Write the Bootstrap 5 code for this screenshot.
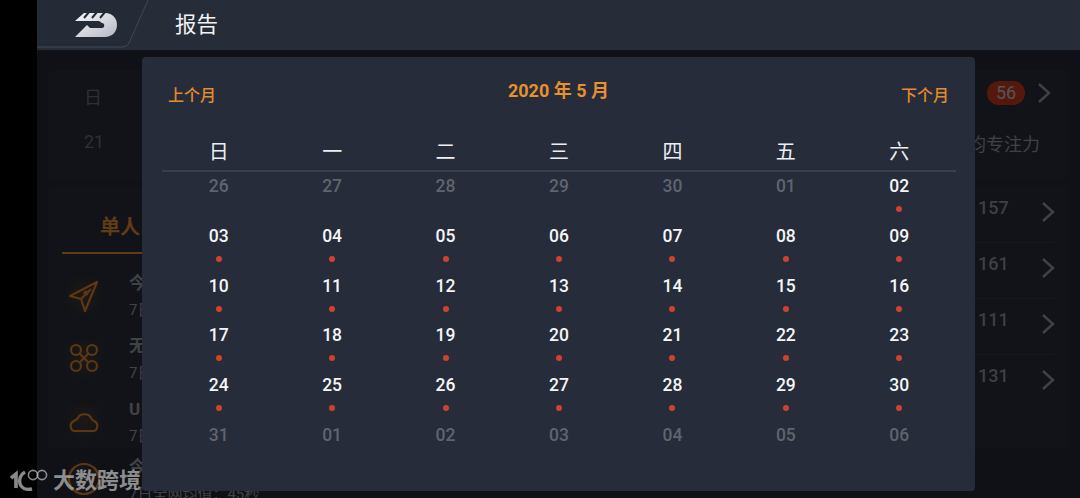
<!DOCTYPE html>
<html lang="zh">
<head>
  <meta charset="utf-8">
  <title>报告</title>
  <link href="https://cdn.jsdelivr.net/npm/bootstrap@5.3.2/dist/css/bootstrap.min.css" rel="stylesheet">
  <style>
    html, body { height: 100%; }
    body { background: #000; overflow: hidden; font-family: Roboto, "Noto Sans CJK SC", sans-serif; color: #fff; }
    .app-shell { margin-left: 37px; height: 498px; background: #2a303c; display: flex; flex-direction: column; }
    .top-bar { height: 50px; flex: none; background: #262c38; }
    .top-title { font-size: 21.5px; margin-left: 27px; color: #f2f3f5; line-height: 52px; }
    .page-body { position: relative; flex: 1; overflow: hidden; padding: 20px 12px 0 11px; background: #272c37; }
    .dim-mask { position: absolute; inset: 0; background: rgba(0, 0, 0, .6); }
    .sum-panel { height: 110px; background: #2b303c; border-radius: 6px; padding: 11px 17px 0 36px; font-size: 18px; color: #737884; }
    .sum-day { margin-top: 3px; }
    .alert-pill { width: 38px; height: 24px; border-radius: 12px; background: #d3401f; color: #d8d2cf; font-size: 18px; line-height: 24px; text-align: center; }
    .sum-second { margin-top: 17px; }
    .focus-label { font-size: 18px; color: #9ea2ab; margin: 3px 11px 0 0; }
    .stat-panel { margin-top: 7px; height: 262px; background: #2b303c; border-radius: 6px; display: flex; justify-content: space-between; }
    .tab-head { width: 200px; margin-left: 14px; height: 67px; padding: 25px 0 0 38px; font-size: 20px; font-weight: 700; color: #f0953a; border-bottom: 2px solid #f0953a; }
    .stat-row { height: 63px; display: flex; padding-left: 13px; }
    .stat-row.last-row { margin-top: -5px; }
    .stat-icon { width: 46px; height: 46px; flex: none; margin-top: 18px; background: radial-gradient(circle, rgba(233, 138, 50, .16), rgba(233, 138, 50, 0) 70%); }
    .stat-text { margin: 16px 0 0 22px; font-size: 16px; color: #a2a6af; white-space: nowrap; }
    .stat-name { font-weight: 700; font-size: 17px; line-height: 27px; }
    .stat-sub { line-height: 27px; font-size: 15px; }
    .num-list { width: 84px; margin-right: 13px; }
    .num-row { height: 56px; border-bottom: 1px solid #3a404c; font-size: 18px; font-weight: 500; color: #9a9ea7; display: flex; justify-content: space-between; }
    .num-row:last-child { border-bottom: 0; }
    .num-row span { margin: 7px 0 0 7px; }
    .chev { margin-top: 14px; }
    .cal-modal { position: absolute; left: 105px; top: 7px; width: 833px; height: 434px; background: #262c39; border-radius: 4px; padding: 0 19px 0 20px; }
    .cal-head { height: 66px; padding: 27px 7px 0 6px; }
    .cal-nav { font-size: 16px; font-weight: 500; color: #e58a2e; line-height: 24px; }
    .cal-title { font-size: 18px; font-weight: 700; color: #e6902f; line-height: 24px; margin-top: -5px; }
    .cal-grid { display: grid; grid-template-columns: repeat(7, 1fr); text-align: center; }
    .week-row { height: 49px; border-bottom: 2px solid #3a3f4b; font-size: 20px; line-height: 58px; color: #eceef1; }
    .day-rows { grid-auto-rows: 49.8px; }
    .day-cell { font-size: 17.5px; font-weight: 500; line-height: 24px; padding-top: 2px; color: #f4f5f7; }
    .day-cell.off { color: #5f6470; }
    .day-dot { width: 6px; height: 6px; border-radius: 50%; background: #d2412c; margin: 8px auto 0; }
    .brand-mark { position: absolute; left: 10px; top: 464px; display: flex; align-items: center; gap: 5px; color: rgba(190, 190, 190, .72); font-size: 22px; font-weight: 700; }
  </style>
</head>
<body>
  <div class="app-shell">
    <div class="top-bar d-flex align-items-center">
      <svg width="111" height="50" viewBox="0 0 111 50">
        <defs>
          <linearGradient id="logoFill" x1="0" y1="0" x2="1" y2="1">
            <stop offset="0" stop-color="#f7f8fa"/>
            <stop offset="1" stop-color="#b4b8c2"/>
          </linearGradient>
        </defs>
        <path d="M0 0H111L90 47H0Z" fill="#242a36"/>
        <path d="M111 0L92 43Q90 47 86 47H0" fill="none" stroke="#414857" stroke-width="1"/>
        <g transform="translate(38 13)">
          <path d="M0 8L9 0H30C38 0 42 6 42 12C42 19 37 24 30 24H0L12 12L15 15H27C30 15 30 10 27 10L24 8Z" fill="url(#logoFill)"/>
          <path d="M9 5L14 -1M17 5L22 -1M25 5L30 -1" stroke="#242a36" stroke-width="2"/>
        </g>
      </svg>
      <div class="top-title">报告</div>
    </div>

    <div class="page-body">
      <div class="sum-panel">
        <div class="d-flex justify-content-between align-items-start">
          <span class="sum-day">日</span>
          <div class="d-flex align-items-center gap-2">
            <div class="alert-pill">56</div>
            <svg class="ms-1" width="14" height="22" viewBox="0 0 14 22"><path d="M2 2L12 11L2 20" fill="none" stroke="#9ea2ab" stroke-width="2.4"/></svg>
          </div>
        </div>
        <div class="d-flex justify-content-between align-items-start sum-second">
          <span>21</span>
          <span class="focus-label">均专注力</span>
        </div>
      </div>

      <div class="stat-panel">
        <div>
          <div class="tab-head">单人</div>
          <div class="stat-row">
            <svg class="stat-icon" viewBox="0 0 46 46" fill="none" stroke="#e98a32" stroke-width="2.2" stroke-linejoin="round">
              <path d="M9 24L36 10L24 39L20 27Z"/><path d="M20 27L30 17"/><circle cx="25" cy="21" r="1.4"/>
            </svg>
            <div class="stat-text"><div class="stat-name">今</div><div class="stat-sub">7日</div></div>
          </div>
          <div class="stat-row">
            <svg class="stat-icon" viewBox="0 0 46 46" fill="none" stroke="#e98a32" stroke-width="2.2">
              <circle cx="15" cy="15" r="5"/><circle cx="31" cy="15" r="5"/><circle cx="15" cy="31" r="5"/><circle cx="31" cy="31" r="5"/>
              <path d="M18 18L28 28M28 18L18 28"/>
            </svg>
            <div class="stat-text"><div class="stat-name">无</div><div class="stat-sub">7日</div></div>
          </div>
          <div class="stat-row">
            <svg class="stat-icon" viewBox="0 0 46 46" fill="none" stroke="#e98a32" stroke-width="2.2" stroke-linejoin="round">
              <path d="M14 33H32C37 33 38 25 33 23C31 22 31 21 30 20C28 15 19 15 17 20C16 22 14 22 13 23C8 25 9 33 14 33Z"/>
            </svg>
            <div class="stat-text"><div class="stat-name">U</div><div class="stat-sub">7日</div></div>
          </div>
          <div class="stat-row last-row">
            <svg class="stat-icon" viewBox="0 0 46 46" fill="none" stroke="#e98a32" stroke-width="2.2"><circle cx="23" cy="23" r="15"/></svg>
            <div class="stat-text"><div class="stat-name">今</div><div class="stat-sub">7日全网均值：45秒</div></div>
          </div>
        </div>
        <div class="num-list">
          <div class="num-row"><span>157</span><svg class="chev" width="14" height="22" viewBox="0 0 14 22"><path d="M2 2L12 11L2 20" fill="none" stroke="#9ea2ab" stroke-width="2.4"/></svg></div>
          <div class="num-row"><span>161</span><svg class="chev" width="14" height="22" viewBox="0 0 14 22"><path d="M2 2L12 11L2 20" fill="none" stroke="#9ea2ab" stroke-width="2.4"/></svg></div>
          <div class="num-row"><span>111</span><svg class="chev" width="14" height="22" viewBox="0 0 14 22"><path d="M2 2L12 11L2 20" fill="none" stroke="#9ea2ab" stroke-width="2.4"/></svg></div>
          <div class="num-row"><span>131</span><svg class="chev" width="14" height="22" viewBox="0 0 14 22"><path d="M2 2L12 11L2 20" fill="none" stroke="#9ea2ab" stroke-width="2.4"/></svg></div>
        </div>
      </div>

      <div class="dim-mask"></div>

      <div class="cal-modal">
        <div class="cal-head d-flex justify-content-between align-items-start">
          <div class="cal-nav">上个月</div>
          <div class="cal-title">2020 年 5 月</div>
          <div class="cal-nav">下个月</div>
        </div>
        <div class="cal-grid week-row">
          <div>日</div><div>一</div><div>二</div><div>三</div><div>四</div><div>五</div><div>六</div>
        </div>
        <div class="cal-grid day-rows" id="dayRows"></div>
      </div>
    </div>
  </div>

  <div class="brand-mark">
    <svg width="38" height="26" viewBox="0 0 38 26" fill="none" stroke="currentColor">
      <path d="M1 10L6 6V20" stroke-width="3.6"/>
      <path d="M15 4C6 9 8 24 22 21" stroke-width="3.4"/>
      <circle cx="23" cy="7" r="4.6" stroke-width="1.6"/>
      <circle cx="32" cy="7" r="4.6" stroke-width="1.6"/>
    </svg>
    <span>大数跨境</span>
  </div>

  <script src="https://cdn.jsdelivr.net/npm/bootstrap@5.3.2/dist/js/bootstrap.bundle.min.js"></script>
  <script>
    const pad = n => String(n).padStart(2, '0');
    let html = '';
    // april tail, then may, then june head
    [26, 27, 28, 29, 30].forEach(d => { html += `<div class="day-cell off">${d}</div>`; });
    html += '<div class="day-cell off">01</div>';
    for (let d = 2; d <= 30; d++) {
      html += `<div class="day-cell">${pad(d)}<div class="day-dot"></div></div>`;
    }
    ['31', '01', '02', '03', '04', '05', '06'].forEach(d => { html += `<div class="day-cell off">${d}</div>`; });
    document.getElementById('dayRows').innerHTML = html;
  </script>
</body>
</html>
